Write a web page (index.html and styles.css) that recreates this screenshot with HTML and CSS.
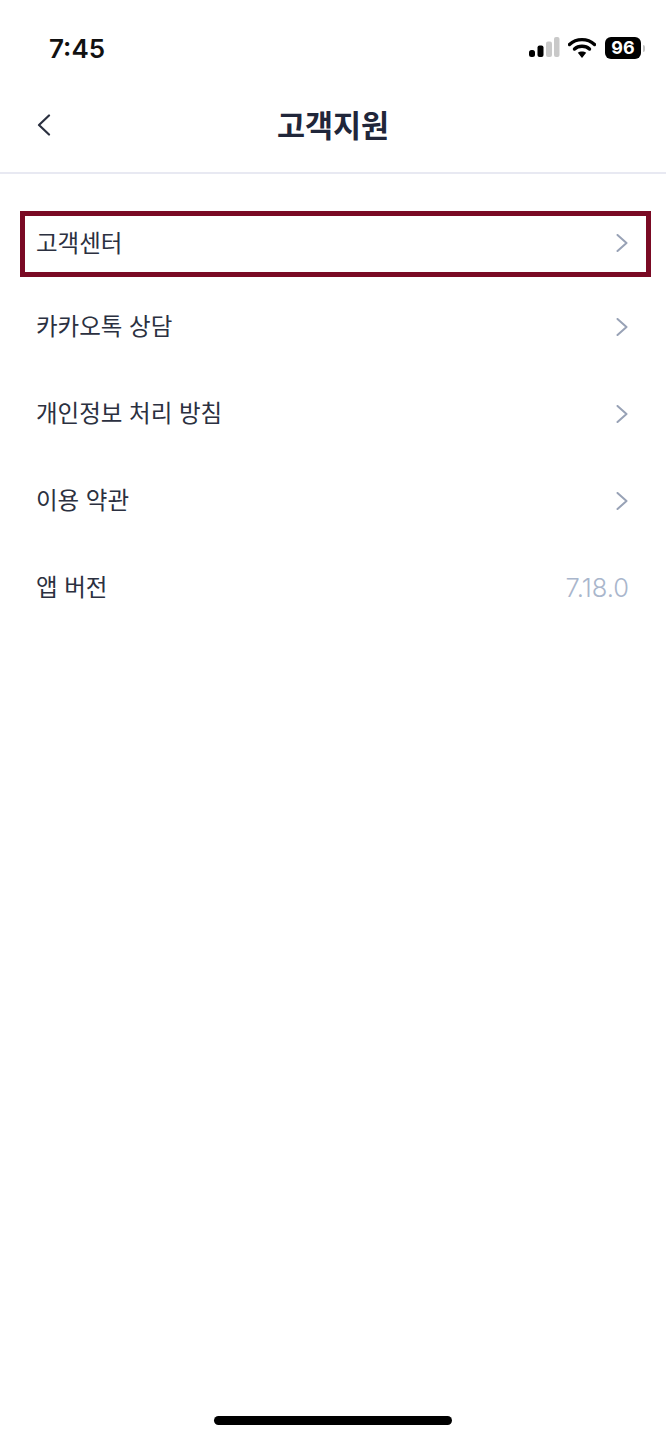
FILE: index.html
```html
<!DOCTYPE html>
<html lang="ko">
<head>
  <meta charset="UTF-8" />
  <meta name="viewport" content="width=device-width, initial-scale=1" />
  <title>고객지원</title>
  <link rel="stylesheet" href="styles.css">
</head>
<body>
  <div class="status-bar">
    <span class="time">7:45</span>
    <div class="status-icons">
      <svg class="signal" width="32" height="22" viewBox="0 0 32 22">
        <rect x="1" y="13" width="6" height="7" rx="2.5" fill="#000" />
        <rect x="9.500" y="8.500" width="6" height="11.500" rx="2" fill="#000" />
        <rect x="18" y="4.500" width="6" height="15.500" rx="2" fill="#c9c9c9" />
        <rect x="26" y="0" width="5.500" height="20" rx="2" fill="#c9c9c9" />
      </svg>
      <svg class="wifi" width="28" height="22" viewBox="0 0 28 22">
        <path d="M1.500 7.500 C8.500 1 19.500 1 26.500 7.500" fill="none" stroke="#000" stroke-width="3.400" stroke-linecap="round" />
        <path d="M6.500 12 C10.500 8.300 17.500 8.300 21.500 12" fill="none" stroke="#000" stroke-width="3.400" stroke-linecap="round" />
        <path d="M14 21 L9.800 15.800 C12 14 16 14 18.200 15.800 Z" fill="#000" />
      </svg>
      <div class="battery">
        <span class="battery-level">96</span>
        <span class="battery-cap"></span>
      </div>
    </div>
  </div>

  <header class="nav">
    <svg class="back" width="14" height="22" viewBox="0 0 14 22">
      <path d="M12 1.500 L2 11 L12 20.500" fill="none" stroke="#2b3040" stroke-width="2.200" stroke-linecap="round" stroke-linejoin="round" />
    </svg>
    <h1>고객지원</h1>
  </header>

  <ul class="menu">
    <li class="menu-row highlighted">
      <span class="label">고객센터</span>
      <svg class="chevron" width="12" height="18" viewBox="0 0 12 18"><path d="M1.500 1 L10.500 9 L1.500 17" /></svg>
    </li>
    <li class="menu-row">
      <span class="label">카카오톡 상담</span>
      <svg class="chevron" width="12" height="18" viewBox="0 0 12 18"><path d="M1.500 1 L10.500 9 L1.500 17" /></svg>
    </li>
    <li class="menu-row">
      <span class="label">개인정보 처리 방침</span>
      <svg class="chevron" width="12" height="18" viewBox="0 0 12 18"><path d="M1.500 1 L10.500 9 L1.500 17" /></svg>
    </li>
    <li class="menu-row">
      <span class="label">이용 약관</span>
      <svg class="chevron" width="12" height="18" viewBox="0 0 12 18"><path d="M1.500 1 L10.500 9 L1.500 17" /></svg>
    </li>
    <li class="menu-row">
      <span class="label">앱 버전</span>
      <span class="version">7.18.0</span>
    </li>
  </ul>

  <div class="home-indicator"></div>
</body>
</html>
```

FILE: styles.css
```css
body {
  font-family: 'Noto Sans CJK KR', 'Noto Sans', sans-serif;
  background-color: #fff;
  color: #2b3040;
  margin: 0;
  width: 666px;
  height: 1440px;
  display: flex;
  flex-direction: column;
  box-sizing: border-box;
}

.status-bar {
  height: 88px;
  padding: 8px 21px 0 49px;
  display: flex;
  justify-content: space-between;
  align-items: center;
  box-sizing: border-box;
}

.time {
  font-family: 'Inter', sans-serif;
  font-size: 26px;
  font-weight: 600;
  color: #111;
}

.status-icons {
  display: flex;
  align-items: center;
  gap: 7px;
}

.signal {
  margin-right: 1px;
}

.wifi {
  margin-right: 2px;
}

.battery {
  display: flex;
  align-items: center;
  gap: 2px;
}

.battery-level {
  width: 36px;
  height: 22px;
  background: #000;
  border-radius: 6px;
  color: #fff;
  font-family: 'Inter', sans-serif;
  font-size: 18px;
  font-weight: 700;
  line-height: 22px;
  text-align: center;
}

.battery-cap {
  width: 2px;
  height: 7px;
  background: #c4c4c4;
  border-radius: 0 2px 2px 0;
}

.nav {
  height: 84px;
  border-bottom: 2px solid #e8e9f2;
  display: flex;
  align-items: center;
  justify-content: center;
  position: relative;
  box-sizing: content-box;
}

.nav h1 {
  margin: 0;
  font-size: 30.5px;
  font-weight: 700;
  color: #20263a;
  padding-bottom: 12px;
}

.back {
  position: absolute;
  left: 37px;
  top: 26px;
}

.menu {
  list-style: none;
  margin: 37px 0 0;
  padding: 0;
}

.menu-row {
  height: 87px;
  padding: 0 38px 0 36px;
  display: flex;
  justify-content: space-between;
  align-items: center;
  font-size: 23.5px;
  color: #2b3040;
  box-sizing: border-box;
}

.label {
  padding-bottom: 4px;
}

.highlighted {
  height: 66px;
  margin: 0 15px 6px 20px;
  padding: 0 18px 0 11px;
  border: 5px solid #7a0a24;
}

.highlighted .chevron {
  margin-bottom: 2px;
}

.chevron {
  fill: none;
  stroke: #98a2b6;
  stroke-width: 2;
  stroke-linecap: round;
  stroke-linejoin: round;
}

.version {
  font-family: 'Inter', sans-serif;
  font-size: 25.500px;
  font-weight: 300;
  color: #a9b6cc;
  margin-right: -1px;
}

.home-indicator {
  width: 238px;
  height: 9px;
  background: #000;
  border-radius: 5px;
  margin: auto auto 15px;
}
```
